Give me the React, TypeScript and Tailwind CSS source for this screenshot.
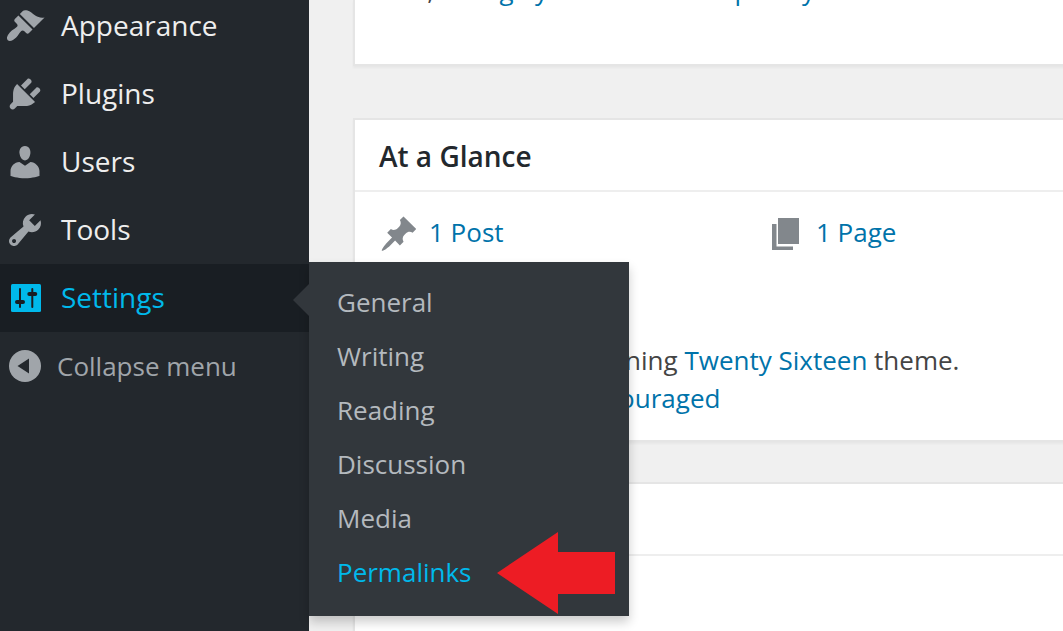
import type { ReactNode } from "react";

const ICONS = {
  appearance:
    "M14.48 11.06L7.41 3.99l1.5-1.5c.5-.56 2.3-.47 3.51.32 1.21.8 1.43 1.28 2.91 2.1 1.18.64 2.45 1.26 4.45.85zm-.71.71L6.7 4.7 4.93 6.47c-.39.39-.39 1.02 0 1.41l1.06 1.06c.39.39.39 1.03 0 1.42-.6.6-1.43 1.11-2.21 1.69-.35.26-.7.53-1.01.84C1.43 14.23.4 16.08 1.4 17.07c.99 1 2.84-.03 4.18-1.36.31-.31.58-.66.85-1.02.57-.78 1.08-1.61 1.69-2.21.39-.39 1.02-.39 1.41 0l1.06 1.06c.39.39 1.02.39 1.41 0z",
  plugins:
    "M13.11 4.36L9.87 7.6 8 5.73l3.24-3.24c.35-.34 1.05-.2 1.56.32.52.51.66 1.21.31 1.55zm-8 1.77l.91-1.12 9.01 9.01-1.19.84c-.71.71-2.63 1.16-3.82 1.16H6.14L4.9 17.26c-.59.59-1.54.59-2.12 0-.59-.58-.59-1.53 0-2.12l1.24-1.24v-3.88c0-1.13.4-3.19 1.09-3.89zm7.26 3.97l3.24-3.24c.34-.35 1.04-.21 1.55.31.52.51.66 1.21.31 1.55l-3.24 3.25z",
  users:
    "M10 9.25c-2.27 0-2.73-3.44-2.73-3.44C7 4.02 7.82 2 9.97 2c2.16 0 2.98 2.02 2.71 3.81 0 0-.41 3.44-2.68 3.44zm0 2.57L12.72 10c2.39 0 4.52 2.33 4.52 4.53v2.49s-3.65 1.13-7.24 1.13c-3.65 0-7.24-1.13-7.24-1.13v-2.49c0-2.25 1.94-4.48 4.47-4.48z",
  tools:
    "M16.68 9.77c-1.34 1.34-3.3 1.67-4.95.99l-5.41 6.52c-.99.99-2.59.99-3.58 0s-.99-2.59 0-3.57l6.52-5.42c-.68-1.65-.35-3.61.99-4.95 1.28-1.28 3.12-1.62 4.72-1.06l-2.89 2.89 2.82 2.82 2.86-2.87c.53 1.58.18 3.39-1.08 4.65zM3.81 16.21c.4.39 1.04.39 1.43 0 .4-.4.4-1.04 0-1.43-.39-.4-1.03-.4-1.43 0-.39.39-.39 1.03 0 1.43z",
  pin: "M10.44 3.02l1.82-1.82 6.36 6.35-1.83 1.82c-1.05-.68-2.48-.57-3.41.36l-.75.75c-.92.93-1.04 2.35-.35 3.41l-1.83 1.82-2.41-2.41-2.8 2.79c-.42.42-3.38 2.71-3.8 2.29s1.86-3.39 2.28-3.81l2.79-2.79L4.1 9.36l1.83-1.82c1.05.69 2.48.57 3.4-.36l.75-.75c.93-.92 1.05-2.35.36-3.41z",
};

function Glyph({ path }: { path: string }) {
  return (
    <svg viewBox="0 0 20 20" className="size-10 shrink-0" fill="currentColor">
      <path d={path} />
    </svg>
  );
}

function SettingsGlyph() {
  return (
    <svg viewBox="0 0 40 40" className="size-10 shrink-0">
      <rect x="6" y="6" width="30" height="28" rx="1.5" fill="#00b9eb" />
      <g stroke="#191e23" strokeWidth="2" strokeLinecap="round">
        <path d="M15 11v18M27.3 11v18" />
        <path d="M12 24h6M24.3 16h6" strokeWidth="4" />
      </g>
    </svg>
  );
}

function CollapseGlyph() {
  return (
    <svg viewBox="0 0 40 40" className="size-10 shrink-0">
      <circle cx="20" cy="20" r="16" fill="#a0a5aa" />
      <path d="M24 12.5v15L12.5 20z" fill="#23282d" />
    </svg>
  );
}

const menu = [
  { label: "Appearance", path: ICONS.appearance },
  { label: "Plugins", path: ICONS.plugins },
  { label: "Users", path: ICONS.users },
  { label: "Tools", path: ICONS.tools },
];

const submenu = ["General", "Writing", "Reading", "Discussion", "Media"];

function MenuRow({ icon, children }: { icon: ReactNode; children: ReactNode }) {
  return (
    <li className="flex h-[68px] items-center gap-4 pl-[5px] text-[#a0a5aa]">
      {icon}
      <span className="pb-0.5 text-[#eee]">{children}</span>
    </li>
  );
}

function Submenu() {
  return (
    <div className="absolute -top-0.5 left-[309px] h-[354px] w-80 bg-[#32373c] pt-[13px] text-[26px] text-[#b4b9be] shadow-[0_6px_10px_rgba(0,0,0,0.2)]">
      <svg viewBox="0 0 16 32" className="absolute top-[22px] -left-4 h-8 w-4">
        <path d="M16 0v32L0 16z" fill="#32373c" />
      </svg>
      <ul className="pl-7">
        {submenu.map((label) => (
          <li key={label} className="h-[54px] leading-[54px]">
            {label}
          </li>
        ))}
        <li className="h-[54px] leading-[54px] text-[#00b9eb]">Permalinks</li>
      </ul>
      <svg viewBox="0 0 118 82" className="absolute top-[270px] left-[188px] h-[82px] w-[118px]">
        <path d="M0 41L61 0v20h57v42H61v20z" fill="#ed1c24" />
      </svg>
    </div>
  );
}

function Card({ className, children }: { className: string; children?: ReactNode }) {
  return (
    <section
      className={`w-[760px] shrink-0 border-2 border-[#e5e5e5] bg-white shadow-[0_2px_2px_rgba(0,0,0,0.04)] ${className}`}
    >
      {children}
    </section>
  );
}

export default function App() {
  return (
    <div className="flex h-[631px] w-[1063px] overflow-hidden bg-[#f0f0f0] font-['Open_Sans','Noto_Sans',sans-serif]">
      <nav className="relative z-10 w-[309px] shrink-0 bg-[#23282d] text-[28px] leading-9">
        <ul className="-mt-2">
          {menu.map((item) => (
            <MenuRow key={item.label} icon={<Glyph path={item.path} />}>
              {item.label}
            </MenuRow>
          ))}
          <li className="relative flex h-[68px] items-center gap-4 bg-[#191e23] pl-[5px] text-[#00b9eb]">
            <SettingsGlyph />
            <span className="pb-0.5">Settings</span>
            <Submenu />
          </li>
          <li className="flex h-[68px] items-center gap-3 pl-[5px] text-[26px] text-[#a0a5aa]">
            <CollapseGlyph />
            <span>Collapse menu</span>
          </li>
        </ul>
      </nav>

      <main className="flex min-w-0 flex-1 flex-col overflow-hidden pl-11 text-[26px] leading-[38px] text-[#444]">
        <Card className="h-[66px] overflow-hidden border-t-0">
          <p className="-mt-[29px] pl-[46px] whitespace-nowrap">
            or, <a className="text-[#0073aa]">change your theme completely</a>
          </p>
        </Card>

        <Card className="mt-[52px] h-[324px]">
          <h2 className="h-[72px] border-b-2 border-[#eee] pl-6 text-[28px] leading-[72px] font-semibold text-[#23282d]">
            At a Glance
          </h2>
          <ul className="grid grid-cols-[387px_1fr] pt-[22px] pl-6 text-[#0073aa]">
            <li className="flex h-10 items-center gap-2.5">
              <span className="text-[#82878c]">
                <Glyph path={ICONS.pin} />
              </span>
              <a className="pb-[5px]">1 Post</a>
            </li>
            <li className="flex h-10 items-center gap-2.5">
              <svg viewBox="0 0 40 40" className="size-10 shrink-0" fill="#82878c">
                <path d="M12 4h21v26H12zM6 10h4.5v22.5H27V36H6z" />
              </svg>
              <a className="pb-[5px]">1 Page</a>
            </li>
          </ul>
          <div className="pt-[87px] pl-6 whitespace-nowrap">
            <p>
              WordPress 4.4.2 running <a className="text-[#0073aa]">Twenty Sixteen</a> theme.
            </p>
            <p className="text-[#0073aa]">Search Engines Discouraged</p>
          </div>
        </Card>

        <Card className="mt-10 h-[200px]">
          <div className="h-[72px] border-b-2 border-[#eee]" />
        </Card>
      </main>
    </div>
  );
}
